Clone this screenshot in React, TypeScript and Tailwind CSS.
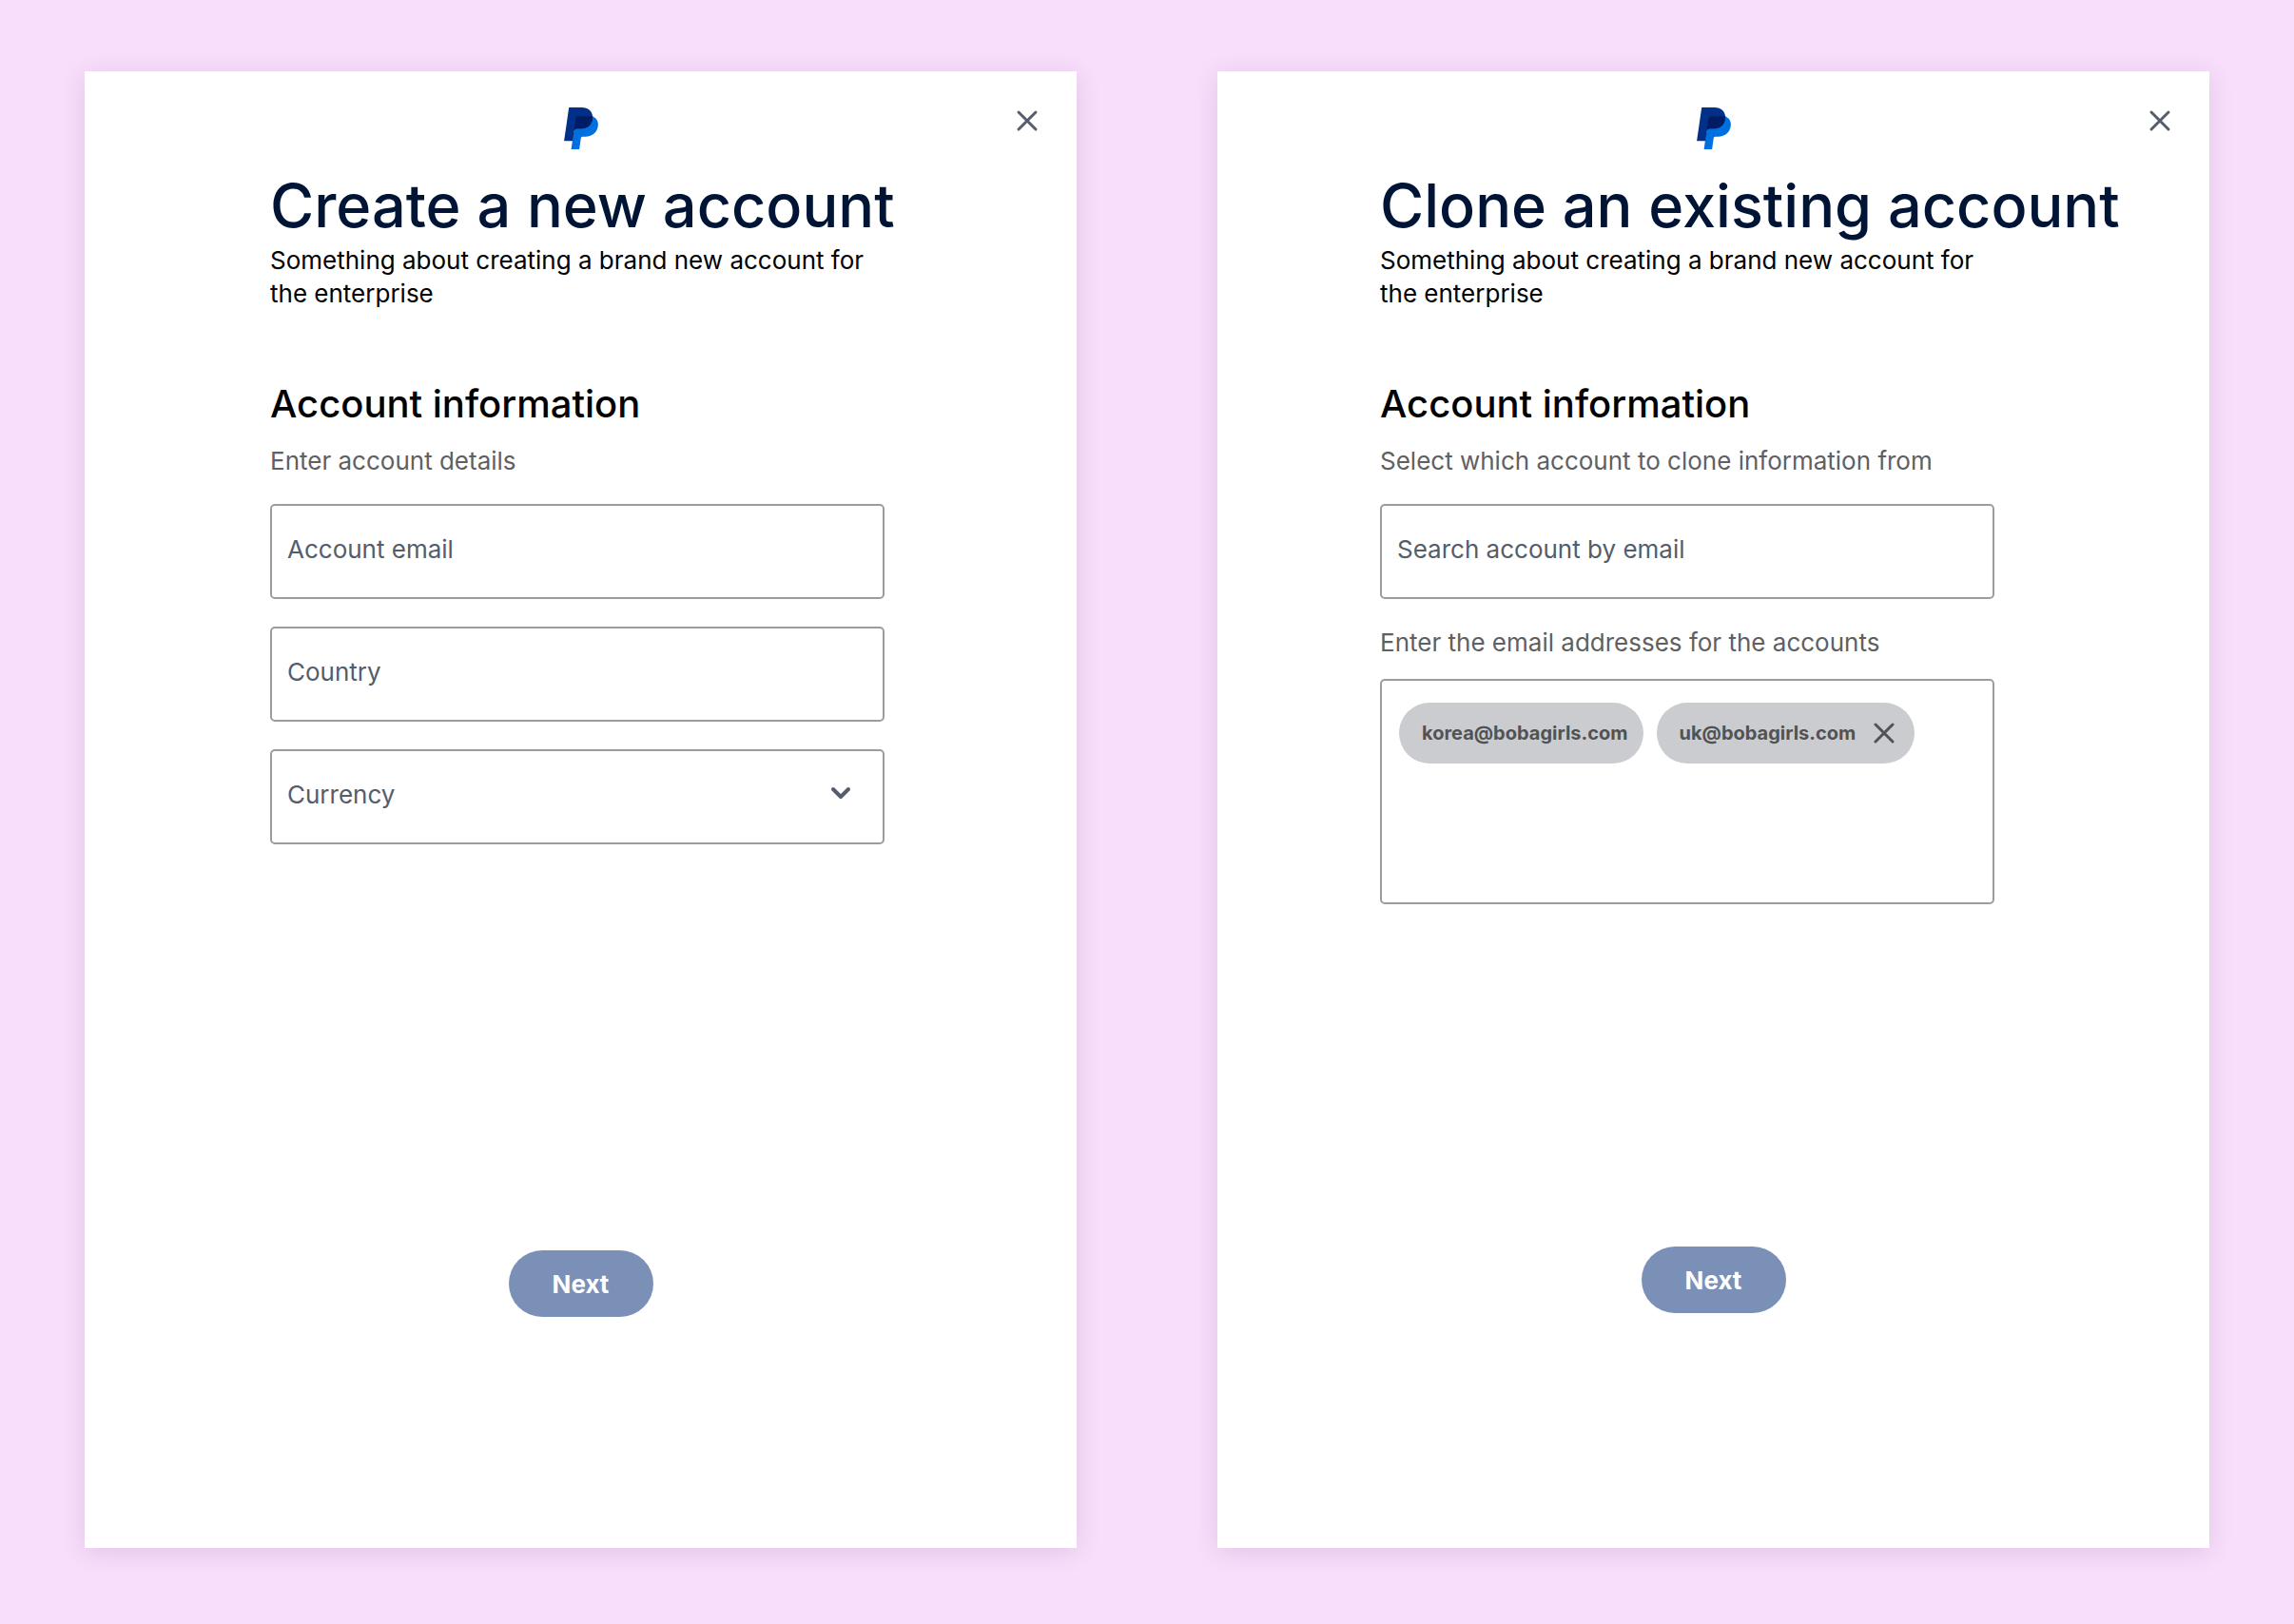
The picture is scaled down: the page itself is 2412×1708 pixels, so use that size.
import React, { useState } from 'react';
import { ChevronDown } from 'lucide-react';

interface PanelProps {
  title: string;
  indent: string;
  footer: string;
  children: React.ReactNode;
}

const Logo: React.FC = () => (
  <svg className="h-11 w-9" viewBox="0 0 105 129" aria-label="PayPal" role="img">
    <path d="M37 27H87C98 31 105 41 105 52C104 76 88 90 65 90H57Q53 90 52 94L47 129H22Z" fill="#0070e0" />
    <path d="M15 0H54C76 0 88 13 88 30C88 51 74 65 54 65H40Q32 65 31 72L27 103H0Z" fill="#003087" />
    <path d="M42 27H88C89 50 74 65 54 65H40Q34 65 31 70L36 32Q37 27 42 27Z" fill="#001c64" />
  </svg>
);

const CloseIcon: React.FC = () => (
  <svg className="size-6" viewBox="0 0 24 24" fill="none" stroke="currentColor" strokeWidth="3" strokeLinecap="round">
    <path d="M3 3 21 21M21 3 3 21" />
  </svg>
);

const fieldClass =
  'h-[100px] w-full rounded-[5px] border-2 border-[#9b9c9e] bg-white px-4 pb-1.5 text-[26px] text-[#545d6b] outline-none placeholder:text-[#545d6b]';

const hintClass = 'block text-[26px] leading-9 text-[#5f6062]';

const Panel: React.FC<PanelProps> = ({ title, indent, footer, children }) => (
  <section className={`flex flex-col bg-white shadow-[0_4px_24px_rgba(90,20,100,0.13)] ${footer}`}>
    <header className="grid grid-cols-[1fr_auto_1fr] px-10 pt-[38px]">
      <span />
      <Logo />
      <button type="button" aria-label="Close" className="mt-0.5 self-start justify-self-end text-[#545d6b]">
        <CloseIcon />
      </button>
    </header>
    <form className="flex grow flex-col" onSubmit={e => e.preventDefault()}>
      <div className={indent}>
        <h1 className="mt-[19px] text-[63px] leading-[80px] font-medium whitespace-nowrap text-[#001435]">{title}</h1>
        <p className="text-[26px] leading-[35px] text-black">
          Something about creating a brand new account for the enterprise
        </p>
        <h2 className="mt-[71px] text-[40px] leading-[56px] font-medium text-black">Account information</h2>
        {children}
      </div>
      <button
        type="submit"
        className="mt-auto h-[70px] w-[152px] self-center rounded-full bg-[#7b90b7] text-[26px] font-bold text-white"
      >
        Next
      </button>
    </form>
  </section>
);

const App: React.FC = () => {
  const [emails, setEmails] = useState(['korea@bobagirls.com', 'uk@bobagirls.com']);

  return (
    <main className="grid min-h-screen grid-cols-2 gap-[148px] bg-[#f8defb] px-[89px] pt-[75px] pb-20 font-['Inter',sans-serif]">
      <Panel title="Create a new account" indent="max-w-[841px] pl-[195px]" footer="pb-[243px]">
        <p className={`mt-3.5 ${hintClass}`}>Enter account details</p>
        <div className="mt-[27px] flex flex-col gap-[29px]">
          <input type="email" aria-label="Account email" placeholder="Account email" className={fieldClass} />
          <input type="text" aria-label="Country" placeholder="Country" className={fieldClass} />
          <div className="relative">
            <select aria-label="Currency" className={`appearance-none ${fieldClass}`}>
              <option>Currency</option>
            </select>
            <ChevronDown className="pointer-events-none absolute top-[30px] right-[30px] size-8 text-[#545d6b]" strokeWidth={3} />
          </div>
        </div>
      </Panel>

      <Panel title="Clone an existing account" indent="max-w-[817px] pl-[171px]" footer="pb-[247px]">
        <label htmlFor="source" className={`mt-3.5 ${hintClass}`}>
          Select which account to clone information from
        </label>
        <input id="source" type="email" placeholder="Search account by email" className={`mt-[27px] ${fieldClass}`} />
        <label htmlFor="targets" className={`mt-7 ${hintClass}`}>
          Enter the email addresses for the accounts
        </label>
        <div className="mt-5 flex h-[237px] flex-wrap content-start gap-x-3.5 rounded-[5px] border-2 border-[#9b9c9e] px-[18px] pt-[23px]">
          {emails.map((email, i) => (
            <span
              key={email}
              className="flex h-16 items-center gap-[18px] rounded-full bg-[#cbccd0] pr-4 pl-6 text-[20px] font-bold text-[#515254]"
            >
              {email}
              {i === emails.length - 1 && (
                <button
                  type="button"
                  aria-label={`Remove ${email}`}
                  className="mr-1"
                  onClick={() => setEmails(emails.filter(e => e !== email))}
                >
                  <CloseIcon />
                </button>
              )}
            </span>
          ))}
          <input id="targets" type="email" className="h-16 min-w-0 flex-1 text-[20px] outline-none" />
        </div>
      </Panel>
    </main>
  );
};

export default App;
